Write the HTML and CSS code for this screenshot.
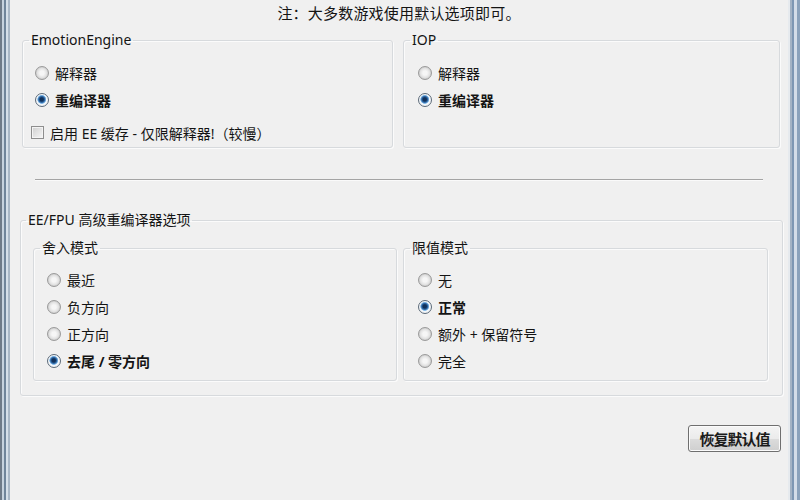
FILE: index.html
```html
<!DOCTYPE html>
<html lang="zh-CN">
<head>
<meta charset="utf-8">
<title>EE/IOP</title>
<link rel="stylesheet" href="styles.css">
</head>
<body>
<div class="window">
  <div class="frame-l"></div>
  <div class="content">
    <p class="note">注：大多数游戏使用默认选项即可。</p>
    <div class="top-row">
      <fieldset class="group">
        <legend>EmotionEngine</legend>
        <div class="body pl12">
          <div class="opt"><span class="radio"></span>解释器</div>
          <div class="opt sel"><span class="radio on"></span>重编译器</div>
          <div class="opt chk"><span class="check"></span>启用 EE 缓存 - 仅限解释器!（较慢）</div>
        </div>
      </fieldset>
      <fieldset class="group">
        <legend>IOP</legend>
        <div class="body pl14">
          <div class="opt"><span class="radio"></span>解释器</div>
          <div class="opt sel"><span class="radio on"></span>重编译器</div>
        </div>
      </fieldset>
    </div>
    <div class="sep"></div>
    <fieldset class="group outer">
      <legend>EE/FPU 高级重编译器选项</legend>
      <div class="inner-row">
        <fieldset class="group">
          <legend>舍入模式</legend>
          <div class="body low pl13">
            <div class="opt"><span class="radio"></span>最近</div>
            <div class="opt"><span class="radio"></span>负方向</div>
            <div class="opt"><span class="radio"></span>正方向</div>
            <div class="opt sel"><span class="radio on"></span>去尾 / 零方向</div>
          </div>
        </fieldset>
        <fieldset class="group">
          <legend>限值模式</legend>
          <div class="body low pl14">
            <div class="opt"><span class="radio"></span>无</div>
            <div class="opt sel"><span class="radio on"></span>正常</div>
            <div class="opt"><span class="radio"></span>额外 + 保留符号</div>
            <div class="opt"><span class="radio"></span>完全</div>
          </div>
        </fieldset>
      </div>
    </fieldset>
    <div class="actions">
      <button class="btn">恢复默认值</button>
    </div>
  </div>
  <div class="frame-r"></div>
</div>
</body>
</html>
```

FILE: styles.css
```css
html, body {
  margin: 0;
  padding: 0;
  background: #f0f0f0;
}
body {
  font-family: "Noto Sans", "Noto Sans CJK SC", sans-serif;
  font-size: 14px;
  color: #141414;
  overflow: hidden;
}
.window {
  display: flex;
  height: 500px;
}
.frame-l {
  width: 10px;
  flex: none;
  background: linear-gradient(to right, #6e7a88 0 2px, #c6d2de 2px 4px, #6f849a 4px 6px, #d5dfe9 6px 8px, #a9b7c6 8px 10px);
}
.frame-r {
  width: 12px;
  flex: none;
  background: linear-gradient(to right, #e6eaee 0 2px, #a3b3c4 2px 4px, #7d97b3 4px 6px, #d3dde8 6px 9px, #8aa2bb 9px 12px);
}
.content {
  flex: 1;
  display: flex;
  flex-direction: column;
  min-width: 0;
}
.note {
  margin: 3px 0 0;
  line-height: 20px;
  font-size: 15px;
  letter-spacing: 0.2px;
  text-align: center;
}
.top-row {
  display: grid;
  grid-template-columns: 371px 377px;
  column-gap: 10px;
  padding: 0 8px 0 12px;
  margin-top: 8px;
}
.group {
  margin: 0;
  padding: 0;
  min-width: 0;
  border: 1px solid #d7dadd;
  border-radius: 3px;
  box-shadow: inset 1px 1px 0 #fbfbfb, 1px 1px 0 #fbfbfb;
}
.group legend {
  margin-left: 6px;
  padding: 0 2px;
  line-height: 18px;
}
.body {
  padding: 10px 0 1px 12px;
}
.body.low {
  padding-top: 9px;
  padding-bottom: 6px;
}
.pl12 { padding-left: 12px; }
.pl13 { padding-left: 13px; }
.pl14 { padding-left: 14px; }
.opt {
  display: flex;
  align-items: center;
  height: 27px;
  gap: 6px;
  white-space: nowrap;
}
.opt.sel {
  font-weight: bold;
}
.opt.chk {
  margin-top: 6px;
  margin-left: -4px;
}
.radio {
  width: 14px;
  height: 14px;
  box-sizing: border-box;
  border-radius: 50%;
  border: 1px solid #9a9a9a;
  background: radial-gradient(circle at 50% 50%, #f6f6f6 0 25%, #e2e2e2 55%, #c9c9c9 75%, #efefef 100%);
  flex: none;
}
.radio.on {
  border-color: #5c6a78;
  background: radial-gradient(circle at 48% 45%, #10305a 0 18%, #2f6aa8 34%, #8cc0ec 46%, #f5f8fb 52%, #e4e8ec 100%);
}
.check {
  width: 13px;
  height: 13px;
  box-sizing: border-box;
  border: 1px solid #8e8e8e;
  background: linear-gradient(135deg, #cfcfcf, #f7f7f7);
  box-shadow: inset 0 0 0 1px #f4f4f4;
  flex: none;
}
.sep {
  margin: 31px 25px 0;
  height: 0;
  border-top: 1px solid #a4a4a4;
  border-bottom: 1px solid #fafafa;
}
.outer {
  margin: 30px 5px 0 10px;
}
.outer > legend {
  margin-left: 5px;
}
.inner-row {
  display: grid;
  grid-template-columns: 364px 365px;
  column-gap: 6px;
  padding: 10px 14px 14px 12px;
}
.actions {
  display: flex;
  justify-content: flex-end;
  padding-right: 7px;
  margin-top: 29px;
}
.btn {
  width: 93px;
  height: 27px;
  padding: 0;
  border: 1px solid #6f6f6f;
  border-radius: 3px;
  background: linear-gradient(#f4f4f4, #ebebeb 50%, #dcdcdc 51%, #cfcfcf);
  box-shadow: inset 0 0 0 1px #fbfbfb;
  font-family: "Noto Sans CJK SC", sans-serif;
  font-size: 15px;
  font-weight: bold;
  color: #1b1b1b;
  letter-spacing: -1px;
}
```
